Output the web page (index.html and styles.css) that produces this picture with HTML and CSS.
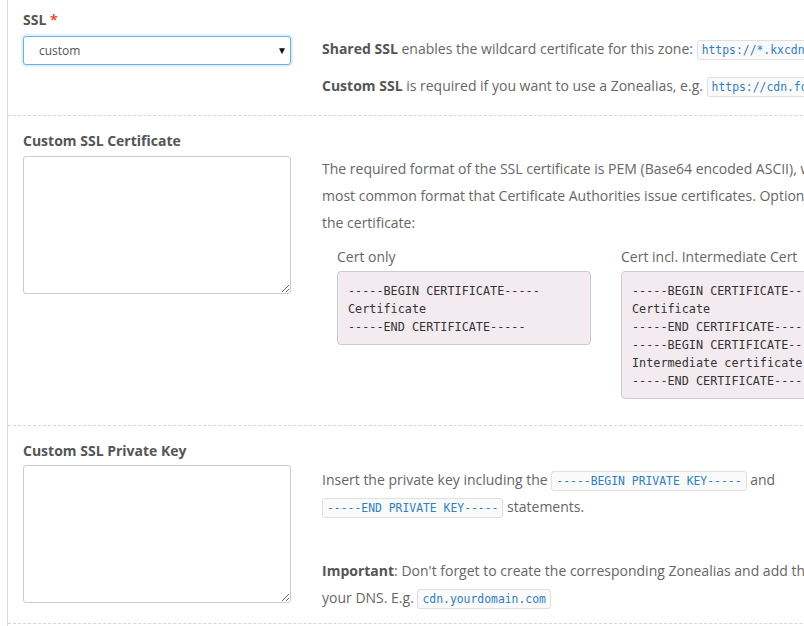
FILE: index.html
```html
<!DOCTYPE html>
<html lang="en">
<head>
<meta charset="utf-8">
<title>SSL settings</title>
<link rel="stylesheet" href="styles.css">
</head>
<body>
<div class="panel">
  <section class="field field-first">
    <label class="field-label">SSL <span class="req">*</span></label>
    <div class="field-row">
      <div class="select-wrap">
        <select class="select">
          <option>custom</option>
        </select>
        <span class="select-arrow">▼</span>
      </div>
      <div class="help">
        <p><b>Shared SSL</b> enables the wildcard certificate for this zone: <code>https://*.kxcdn.com</code></p>
        <p class="last"><b>Custom SSL</b> is required if you want to use a Zonealias, e.g. <code>https://cdn.foo.com</code></p>
      </div>
    </div>
  </section>

  <section class="field field-cert">
    <label class="field-label">Custom SSL Certificate</label>
    <div class="field-row">
      <div class="input-col">
        <textarea class="textarea"></textarea>
      </div>
      <div class="help">
        <p class="nowrap">The required format of the SSL certificate is PEM (Base64 encoded ASCII), which is the<br>most common format that Certificate Authorities issue certificates. Optionally add the intermediate certificate after<br>the certificate:</p>
        <div class="cert-grid">
          <div class="cert-col">
            <div class="cert-title">Cert only</div>
            <pre class="cert">-----BEGIN CERTIFICATE-----
Certificate
-----END CERTIFICATE-----</pre>
          </div>
          <div class="cert-col">
            <div class="cert-title">Cert incl. Intermediate Cert</div>
            <pre class="cert">-----BEGIN CERTIFICATE-----
Certificate
-----END CERTIFICATE-----
-----BEGIN CERTIFICATE-----
Intermediate certificate
-----END CERTIFICATE-----</pre>
          </div>
        </div>
      </div>
    </div>
  </section>

  <section class="field field-key">
    <label class="field-label">Custom SSL Private Key</label>
    <div class="field-row">
      <div class="input-col">
        <textarea class="textarea"></textarea>
      </div>
      <div class="help">
        <p class="nowrap">Insert the private key including the <code>-----BEGIN PRIVATE KEY-----</code> and<br><code>-----END PRIVATE KEY-----</code> statements.</p>
        <p class="important nowrap"><b>Important</b>: Don't forget to create the corresponding Zonealias and add the CNAME record to<br>your DNS. E.g. <code>cdn.yourdomain.com</code></p>
      </div>
    </div>
  </section>
</div>
</body>
</html>
```

FILE: styles.css
```css
html, body {
  margin: 0;
  padding: 0;
  overflow: hidden;
  background: #fff;
}

body {
  font-family: "Open Sans", "Liberation Sans", sans-serif;
  font-size: 14px;
  color: #666;
}

.panel {
  margin-left: 7px;
  width: 1200px;
  border-left: 1px solid #ddd;
  min-height: 700px;
}

.field {
  padding: 15px 15px 0;
  border-bottom: 1px dashed #d6d6d6;
}

.field-first {
  padding-top: 10px;
}

.field-label {
  display: block;
  font-weight: 700;
  color: #555;
  line-height: 20px;
  margin-bottom: 5px;
}

.field-first .field-label {
  margin-bottom: 6px;
}

.field-key .field-label {
  margin-bottom: 4px;
}

.req {
  color: #e74c3c;
}

.field-row {
  display: grid;
  grid-template-columns: 268px 1fr;
  column-gap: 31px;
  align-items: start;
}

.select-wrap {
  position: relative;
  height: 29px;
}

.select {
  appearance: none;
  -webkit-appearance: none;
  width: 268px;
  height: 29px;
  box-sizing: border-box;
  border: 1px solid #66afe9;
  border-radius: 3px;
  box-shadow: 0 0 0 2px rgba(102, 175, 233, 0.18);
  background: #fff;
  font-family: "Open Sans", "Liberation Sans", sans-serif;
  font-size: 12px;
  color: #555;
  padding: 0 0 0 15px;
  outline: none;
}

.select-arrow {
  position: absolute;
  right: 4px;
  top: 9px;
  font-size: 10px;
  line-height: 10px;
  color: #111;
  pointer-events: none;
}

.input-col {
  height: 138px;
}

.textarea {
  display: block;
  width: 268px;
  height: 138px;
  min-height: 138px;
  box-sizing: border-box;
  border: 1px solid #ccc;
  border-radius: 3px;
  margin: 0;
  font-family: "Open Sans", sans-serif;
  font-size: 13px;
}

.help {
  margin-top: -1px;
  padding-bottom: 15px;
}

.field-key .help {
  margin-top: 1px;
  padding-bottom: 12px;
}

.help p {
  margin: 0 0 11px;
  line-height: 27px;
}

.field-first .help p {
  margin-bottom: 10px;
}

.help p.last {
  margin-bottom: 0;
}

.field-first .help {
  padding-bottom: 16px;
}

.nowrap {
  white-space: nowrap;
}

b {
  font-weight: 700;
  color: #555;
}

code {
  font-family: "DejaVu Sans Mono", "Liberation Mono", monospace;
  font-size: 11.4px;
  line-height: 14px;
  color: #2f7fc1;
  background: #fafafa;
  border: 1px solid #e0e0e0;
  border-radius: 3px;
  padding: 2px 4px;
}

.cert-grid {
  display: grid;
  grid-template-columns: 254px 254px;
  column-gap: 30px;
  padding-left: 15px;
  margin-top: 9px;
}

.cert-title {
  line-height: 20px;
  margin-bottom: 4px;
}

.cert {
  margin: 0 0 11px;
  font-family: "DejaVu Sans Mono", "Liberation Mono", monospace;
  font-size: 11.8px;
  line-height: 18px;
  color: #333;
  background: #f3ebef;
  border: 1px solid #ccc;
  border-radius: 4px;
  padding: 10px 10px 8px;
}

.help p.important {
  margin-top: 37px;
  margin-bottom: 0;
}
```
